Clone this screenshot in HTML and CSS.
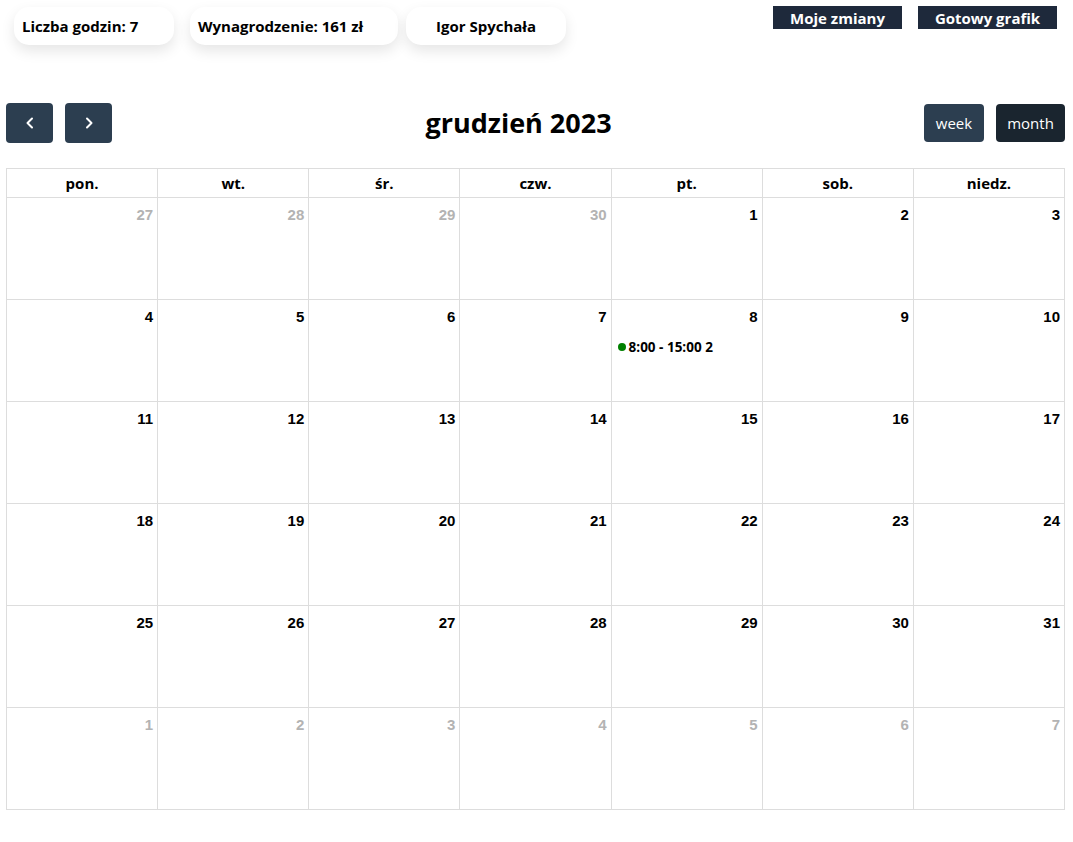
FILE: index.html
```html
<!DOCTYPE html>
<html lang="pl">
<head>
<meta charset="utf-8">
<link rel="stylesheet" href="styles.css">
</head>
<body>
<header class="topbar">
  <div class="stats">
    <div class="card card-hours">Liczba godzin: 7</div>
    <div class="card card-pay">Wynagrodzenie: 161 zł</div>
    <div class="card card-name">Igor Spychała</div>
  </div>
  <nav class="links">
    <a class="link-btn">Moje zmiany</a>
    <a class="link-btn">Gotowy grafik</a>
  </nav>
</header>

<main class="calendar">
  <div class="toolbar">
    <div class="nav-group">
      <button class="btn nav-btn" aria-label="prev">
        <svg width="14" height="14" viewBox="0 0 14 14"><path d="M9 2.5 L4.5 7 L9 11.5" fill="none" stroke="#fff" stroke-width="2" stroke-linecap="round" stroke-linejoin="round"/></svg>
      </button>
      <button class="btn nav-btn" aria-label="next">
        <svg width="14" height="14" viewBox="0 0 14 14"><path d="M5 2.5 L9.5 7 L5 11.5" fill="none" stroke="#fff" stroke-width="2" stroke-linecap="round" stroke-linejoin="round"/></svg>
      </button>
    </div>
    <h2 class="title">grudzień 2023</h2>
    <div class="view-group">
      <button class="btn view-btn">week</button>
      <button class="btn view-btn active">month</button>
    </div>
  </div>

  <div class="grid">
    <div class="head">pon.</div>
    <div class="head">wt.</div>
    <div class="head">śr.</div>
    <div class="head">czw.</div>
    <div class="head">pt.</div>
    <div class="head">sob.</div>
    <div class="head">niedz.</div>

    <div class="day other"><span class="num">27</span></div>
    <div class="day other"><span class="num">28</span></div>
    <div class="day other"><span class="num">29</span></div>
    <div class="day other"><span class="num">30</span></div>
    <div class="day"><span class="num">1</span></div>
    <div class="day"><span class="num">2</span></div>
    <div class="day"><span class="num">3</span></div>

    <div class="day"><span class="num">4</span></div>
    <div class="day"><span class="num">5</span></div>
    <div class="day"><span class="num">6</span></div>
    <div class="day"><span class="num">7</span></div>
    <div class="day"><span class="num">8</span>
      <div class="event"><span class="dot"></span><span class="ev-text">8:00 - 15:00 2</span></div>
    </div>
    <div class="day"><span class="num">9</span></div>
    <div class="day"><span class="num">10</span></div>

    <div class="day"><span class="num">11</span></div>
    <div class="day"><span class="num">12</span></div>
    <div class="day"><span class="num">13</span></div>
    <div class="day"><span class="num">14</span></div>
    <div class="day"><span class="num">15</span></div>
    <div class="day"><span class="num">16</span></div>
    <div class="day"><span class="num">17</span></div>

    <div class="day"><span class="num">18</span></div>
    <div class="day"><span class="num">19</span></div>
    <div class="day"><span class="num">20</span></div>
    <div class="day"><span class="num">21</span></div>
    <div class="day"><span class="num">22</span></div>
    <div class="day"><span class="num">23</span></div>
    <div class="day"><span class="num">24</span></div>

    <div class="day"><span class="num">25</span></div>
    <div class="day"><span class="num">26</span></div>
    <div class="day"><span class="num">27</span></div>
    <div class="day"><span class="num">28</span></div>
    <div class="day"><span class="num">29</span></div>
    <div class="day"><span class="num">30</span></div>
    <div class="day"><span class="num">31</span></div>

    <div class="day other"><span class="num">1</span></div>
    <div class="day other"><span class="num">2</span></div>
    <div class="day other"><span class="num">3</span></div>
    <div class="day other"><span class="num">4</span></div>
    <div class="day other"><span class="num">5</span></div>
    <div class="day other"><span class="num">6</span></div>
    <div class="day other"><span class="num">7</span></div>
  </div>
</main>
</body>
</html>
```

FILE: styles.css
```css
* { box-sizing: border-box; }

body {
  margin: 0;
  background: #fff;
  color: #000;
  font-family: "Open Sans", "Noto Sans", sans-serif;
}

.topbar {
  display: flex;
  justify-content: space-between;
  align-items: flex-start;
  padding: 6px 16px 0 14px;
  height: 103px;
}

.stats {
  display: flex;
  padding-top: 1px;
}

.card {
  height: 38px;
  border-radius: 15px;
  background: #fff;
  box-shadow: 0 6px 14px rgba(0, 0, 0, 0.1);
  font-weight: 700;
  font-size: 15px;
  display: flex;
  align-items: center;
  padding-left: 8px;
  white-space: nowrap;
}

.card-hours { width: 160px; margin-right: 16px; }
.card-pay { width: 208px; margin-right: 8px; }
.card-name { width: 160px; justify-content: center; padding-left: 0; }

.links {
  display: flex;
  gap: 16px;
}

.link-btn {
  display: flex;
  align-items: center;
  justify-content: center;
  height: 23px;
  background: #1e293b;
  color: #fff;
  font-weight: 700;
  font-size: 15px;
  padding-top: 1px;
}
.links .link-btn:first-child { width: 129px; }
.links .link-btn:last-child { width: 139px; }

.calendar {
  padding: 0 8px 0 6px;
}

.toolbar {
  display: flex;
  justify-content: space-between;
  align-items: center;
  height: 40px;
  margin-bottom: 25px;
}

.nav-group, .view-group {
  display: flex;
  gap: 12px;
  width: 141px;
}
.view-group { justify-content: flex-end; }

.btn {
  border: 0;
  border-radius: 4px;
  background: #2c3e50;
  color: #fff;
  font-family: "Open Sans", "Noto Sans", sans-serif;
  font-size: 15px;
  padding: 0;
  display: flex;
  align-items: center;
  justify-content: center;
}

.nav-btn { width: 47px; height: 40px; }
.view-btn { height: 38px; }
.view-btn:first-child { width: 60px; }
.view-btn.active { width: 69px; background: #1a252f; }

.title {
  margin: 0;
  font-size: 27px;
  font-weight: 700;
  transform: translate(-17px, -1px);
}

.grid {
  display: grid;
  grid-template-columns: repeat(7, 1fr);
  grid-template-rows: 29px repeat(6, 102px);
  border-top: 1px solid #ddd;
  border-left: 1px solid #ddd;
}

.head, .day {
  border-right: 1px solid #ddd;
  border-bottom: 1px solid #ddd;
}

.head {
  display: flex;
  align-items: center;
  justify-content: center;
  font-weight: 700;
  font-size: 15px;
}

.day {
  display: flex;
  flex-direction: column;
  align-items: stretch;
  padding: 8px 4px 0 4px;
}

.num {
  align-self: flex-end;
  font-family: "Liberation Sans", Arial, sans-serif;
  font-weight: 700;
  font-size: 15px;
  line-height: 18px;
}

.other .num { color: #b3b3b3; }

.event {
  display: flex;
  align-items: center;
  margin-top: 12px;
  padding-left: 2px;
}

.dot {
  width: 8px;
  height: 8px;
  border-radius: 50%;
  background: #008000;
  margin-right: 3px;
}

.ev-text {
  font-weight: 700;
  font-size: 13.5px;
}
```
